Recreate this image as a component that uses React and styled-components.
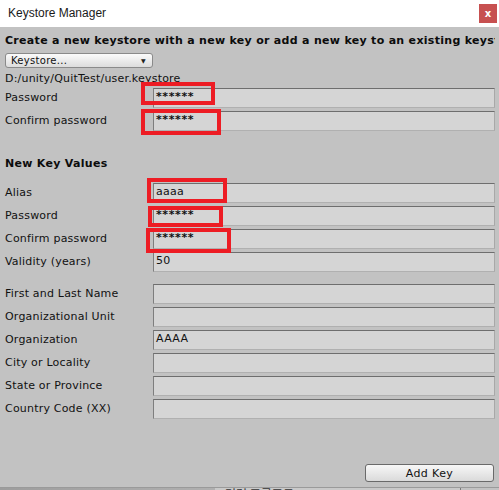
import React from "react";
import styled, { createGlobalStyle } from "styled-components";

const GlobalStyle = createGlobalStyle`
	html, body {
		margin: 0;
		padding: 0;
		background: #c2c2c2;
		overflow: hidden;
	}
`;

const Window = styled.div`
	position: relative;
	width: 499px;
	height: 490px;
	display: flex;
	flex-direction: column;
	font-family: "DejaVu Sans", Verdana, sans-serif;
	font-size: 11px;
	color: #111;
	overflow: hidden;
`;

const TitleBar = styled.div`
	height: 27px;
	flex: none;
	background: #ffffff;
	display: flex;
	align-items: flex-start;
	justify-content: space-between;
	padding-left: 8px;
	box-sizing: border-box;
`;

const Title = styled.span`
	font-family: "Liberation Sans", Arial, sans-serif;
	font-size: 12px;
	line-height: 26px;
	color: #1a1a1a;
`;

const CloseButton = styled.div`
	width: 18px;
	height: 19px;
	margin: 4px 2px 0 0;
	background: #c75050;
	color: #fff;
	font-family: "DejaVu Sans", sans-serif;
	font-weight: bold;
	font-size: 10px;
	display: flex;
	align-items: center;
	justify-content: center;
`;

const Panel = styled.div`
	flex: 1;
	min-width: 0;
	display: flex;
	flex-direction: column;
	padding: 6px 4px 5px 5px;
	background: #c2c2c2;
	overflow: hidden;
	box-sizing: border-box;
`;

const Heading = styled.div`
	font-weight: bold;
	font-size: 11px;
	line-height: 16px;
	height: 16px;
	white-space: nowrap;
	overflow: hidden;
	letter-spacing: 0.3px;
	margin-top: ${(p) => p.$top || 0}px;
	color: #0c0c0c;
`;

const Dropdown = styled.div`
	margin-top: 4px;
	width: 148px;
	height: 15px;
	box-sizing: border-box;
	border: 1px solid #8a8a8a;
	border-radius: 3px;
	background: linear-gradient(#fbfbfb, #dcdcdc);
	display: flex;
	align-items: center;
	justify-content: space-between;
	padding: 0 6px 0 5px;
	font-size: 10px;
	letter-spacing: 0.3px;
`;

const Caret = styled.span`
	font-size: 6px;
	color: #222;
`;

const PathText = styled.div`
	margin-top: 3px;
	height: 16px;
	line-height: 16px;
	letter-spacing: 0.2px;
`;

const Group = styled.div`
	display: flex;
	flex-direction: column;
	gap: 3px;
	margin-top: ${(p) => p.$top || 0}px;
`;

const Row = styled.div`
	display: flex;
	align-items: center;
	height: 20px;
`;

const Label = styled.span`
	width: 148px;
	flex: none;
	letter-spacing: 0.2px;
	padding-bottom: 2px;
`;

const Field = styled.div`
	flex: 1;
	min-width: 0;
	height: 20px;
	box-sizing: border-box;
	background: #d5d5d5;
	border-top: 1px solid #6e6e6e;
	border-left: 1px solid #7e7e7e;
	border-right: 1px solid #a8a8a8;
	border-bottom: 1px solid #b0b0b0;
	padding: 0 0 0 2px;
	line-height: 16px;
	letter-spacing: ${(p) => (p.$secret ? "0.6px" : "0.3px")};
	font-weight: ${(p) => (p.$secret ? "bold" : "normal")};
`;

const Footer = styled.div`
	margin-top: auto;
	display: flex;
	justify-content: flex-end;
`;

const AddButton = styled.button`
	width: 129px;
	height: 18px;
	margin-right: 1px;
	border: 1px solid #6a6a6a;
	border-radius: 3px;
	background: linear-gradient(#f7f7f7, #dadada);
	font-family: "DejaVu Sans", Verdana, sans-serif;
	font-size: 11px;
	letter-spacing: 0.4px;
	color: #111;
	padding: 0;
`;

const Strip = styled.div`
	height: 2px;
	flex: none;
	display: flex;
	border-top: 1px solid #9a9a9a;
	overflow: hidden;
`;

const StripPart = styled.div`
	width: ${(p) => (p.$w ? `${p.$w}px` : "auto")};
	flex: ${(p) => (p.$w ? "none" : 1)};
	background: ${(p) => p.$bg};
	border-right: ${(p) => (p.$line ? "1px solid #7a7a7a" : "none")};
	font-family: "Noto Sans CJK KR", sans-serif;
	font-size: 12px;
	line-height: 11px;
	padding-left: 10px;
	color: #333;
	white-space: nowrap;
`;

const Mark = styled.div`
	position: absolute;
	box-sizing: border-box;
	border: 4px solid #ed1c24;
	pointer-events: none;
`;

const marks = [
	{ x: 141, y: 82, w: 74, h: 23 },
	{ x: 141, y: 109, w: 80, h: 26 },
	{ x: 147, y: 178, w: 80, h: 25 },
	{ x: 148, y: 206, w: 75, h: 21 },
	{ x: 146, y: 228, w: 85, h: 25 },
];

const storeRows = [
	{ label: "Password", value: "******", secret: true },
	{ label: "Confirm password", value: "******", secret: true },
];

const keyRows = [
	{ label: "Alias", value: "aaaa" },
	{ label: "Password", value: "******", secret: true },
	{ label: "Confirm password", value: "******", secret: true },
	{ label: "Validity (years)", value: "50" },
];

const nameRows = [
	{ label: "First and Last Name", value: "" },
	{ label: "Organizational Unit", value: "" },
	{ label: "Organization", value: "AAAA" },
	{ label: "City or Locality", value: "" },
	{ label: "State or Province", value: "" },
	{ label: "Country Code (XX)", value: "" },
];

const Fields = ({ rows, top }) => (
	<Group $top={top}>
		{rows.map((r, i) => (
			<Row key={i}>
				<Label>{r.label}</Label>
				<Field $secret={r.secret}>{r.value}</Field>
			</Row>
		))}
	</Group>
);

const App = () => {
	return (
		<Window>
			<GlobalStyle />
			<TitleBar>
				<Title>Keystore Manager</Title>
				<CloseButton>x</CloseButton>
			</TitleBar>
			<Panel>
				<Heading>
					Create a new keystore with a new key or add a new key to an existing keystore
				</Heading>
				<Dropdown>
					<span>Keystore...</span>
					<Caret>▼</Caret>
				</Dropdown>
				<PathText>D:/unity/QuitTest/user.keystore</PathText>
				<Fields rows={storeRows} top={1} />
				<Heading $top={25}>New Key Values</Heading>
				<Fields rows={keyRows} top={11} />
				<Fields rows={nameRows} top={12} />
				<Footer>
					<AddButton>Add Key</AddButton>
				</Footer>
			</Panel>
			<Strip>
				<StripPart $w={205} $bg="linear-gradient(90deg, #9d9d9d, #b0b0b0)" />
				<StripPart $w={235} $bg="#c9c9c9" $line>
					명령 프롬프트
				</StripPart>
				<StripPart $bg="#c2c2c2" />
			</Strip>
			{marks.map((m, i) => (
				<Mark
					key={i}
					style={{ left: m.x, top: m.y, width: m.w, height: m.h }}
				/>
			))}
		</Window>
	);
};

export default App;
